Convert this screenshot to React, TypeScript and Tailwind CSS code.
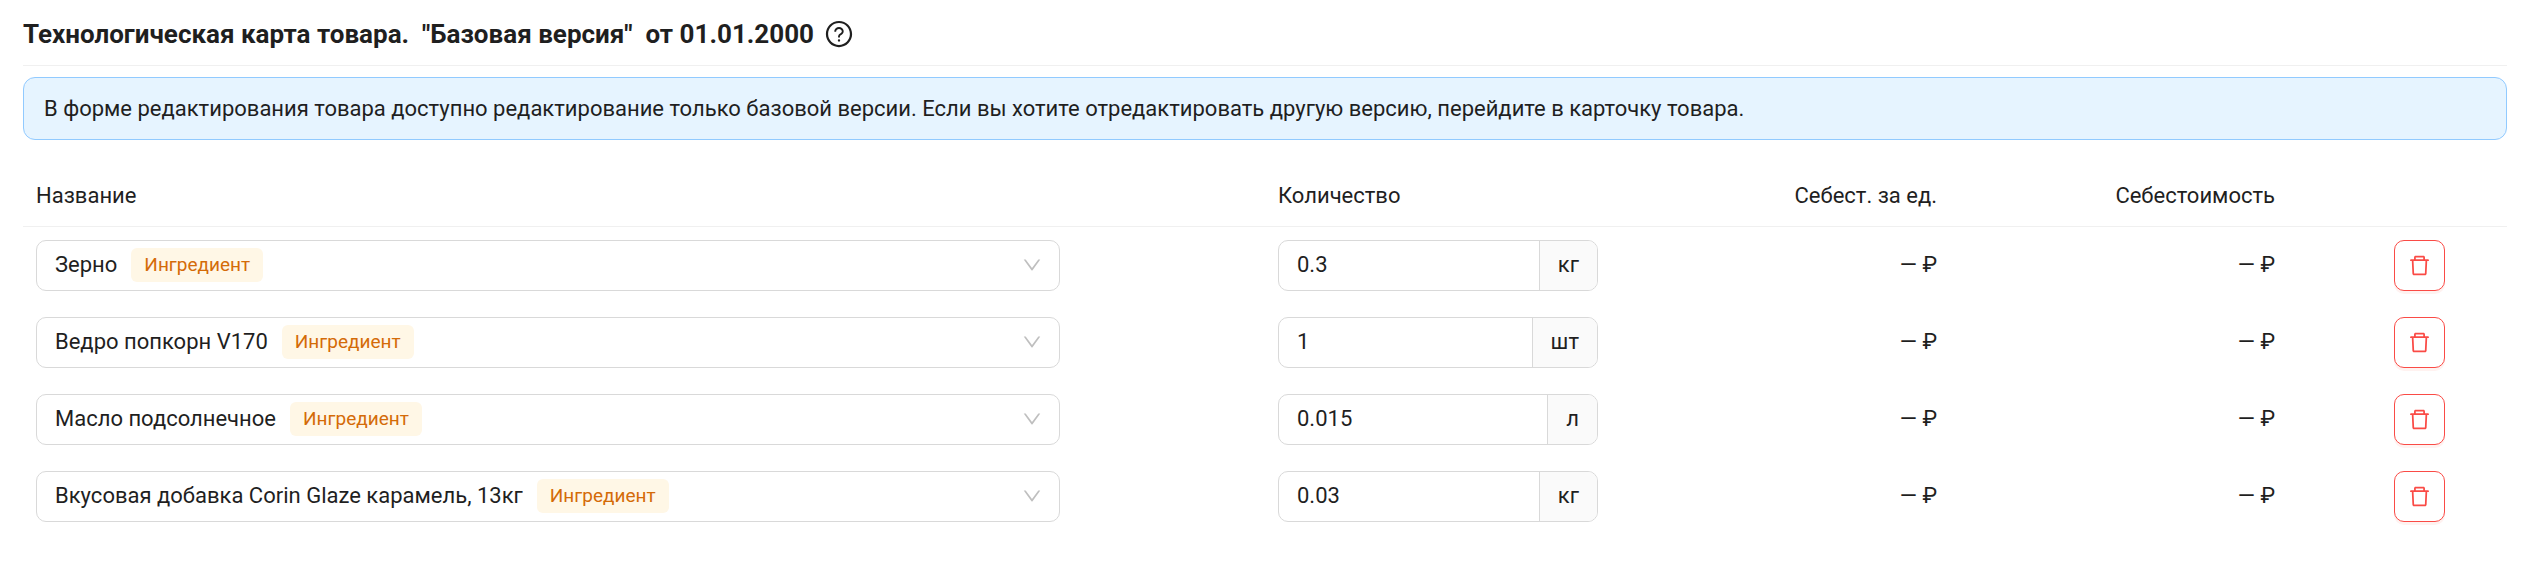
import { useState } from "react";
import {
  AiOutlineDelete,
  AiOutlineDown,
  AiOutlineQuestionCircle,
} from "react-icons/ai";

type Item = {
  id: number;
  name: string;
  amount: string;
  unit: string;
};

const initialItems: Item[] = [
  { id: 1, name: "Зерно", amount: "0.3", unit: "кг" },
  { id: 2, name: "Ведро попкорн V170", amount: "1", unit: "шт" },
  { id: 3, name: "Масло подсолнечное", amount: "0.015", unit: "л" },
  {
    id: 4,
    name: "Вкусовая добавка Corin Glaze карамель, 13кг",
    amount: "0.03",
    unit: "кг",
  },
];

const products = initialItems.map((item) => item.name);

function ProductSelect({
  value,
  onChange,
}: {
  value: string;
  onChange: (value: string) => void;
}) {
  return (
    <div className="flex h-[51px] items-center rounded-[10px] border border-[#d9d9d9] bg-white pl-[18px] pr-4">
      <select
        aria-label="Название"
        value={value}
        onChange={(e) => onChange(e.target.value)}
        className="mr-[14px] cursor-pointer appearance-none bg-transparent outline-none [field-sizing:content]"
      >
        {products.map((name) => (
          <option key={name} value={name}>
            {name}
          </option>
        ))}
      </select>
      <span className="rounded-md bg-[#fff7e6] px-[13px] text-[19px] leading-[34px] text-[#d46b08]">
        Ингредиент
      </span>
      <AiOutlineDown className="ml-auto size-[22px] text-[#bfbfbf]" />
    </div>
  );
}

function AmountInput({
  value,
  unit,
  onChange,
}: {
  value: string;
  unit: string;
  onChange: (value: string) => void;
}) {
  return (
    <div className="flex h-[51px] overflow-hidden rounded-[10px] border border-[#d9d9d9] bg-white">
      <input
        type="text"
        aria-label="Количество"
        value={value}
        onChange={(e) => onChange(e.target.value)}
        className="min-w-0 flex-1 px-[18px] outline-none"
      />
      <span className="flex items-center border-l border-[#d9d9d9] bg-[#fafafa] px-[18px]">
        {unit}
      </span>
    </div>
  );
}

export default function App() {
  const [items, setItems] = useState<Item[]>(initialItems);

  const updateItem = (id: number, patch: Partial<Item>) => {
    setItems(items.map((item) => (item.id === id ? { ...item, ...patch } : item)));
  };

  const removeItem = (id: number) => {
    setItems(items.filter((item) => item.id !== id));
  };

  return (
    <div className="min-h-screen bg-white pl-[23px] pr-[35px] font-['Roboto',sans-serif] text-[22px] leading-[34px] text-[#1f1f1f]">
      <div className="flex h-[66px] items-center gap-2.5 border-b border-[#f0f0f0] pt-0.5">
        <h1 className="whitespace-pre text-[26px] font-bold">
          {'Технологическая карта товара.  "Базовая версия"  от 01.01.2000'}
        </h1>
        <button type="button" aria-label="Справка" className="cursor-pointer">
          <AiOutlineQuestionCircle className="size-[30px]" />
        </button>
      </div>

      <div
        role="alert"
        className="mt-[11px] rounded-xl border border-[#91caff] bg-[#e6f4ff] px-5 pb-[13px] pt-[14px]"
      >
        В форме редактирования товара доступно редактирование только базовой версии. Если вы
        хотите отредактировать другую версию, перейдите в карточку товара.
      </div>

      <table className="mt-[23px] w-full table-fixed">
        <thead>
          <tr className="h-[63px] border-b border-[#f0f0f0]">
            <th className="w-1/2 px-[13px] pt-1 text-left font-normal">Название</th>
            <th className="w-[346px] px-[13px] pt-1 text-left font-normal">Количество</th>
            <th className="w-[339px] px-[13px] pt-1 text-right font-normal">Себест. за ед.</th>
            <th className="w-[338px] px-[13px] pt-1 text-right font-normal">Себестоимость</th>
            <th aria-label="Действия" />
          </tr>
        </thead>
        <tbody>
          {items.map((item) => (
            <tr key={item.id}>
              <td className="py-[13px] pl-[13px] pr-[205px]">
                <ProductSelect
                  value={item.name}
                  onChange={(name) => updateItem(item.id, { name })}
                />
              </td>
              <td className="px-[13px]">
                <AmountInput
                  value={item.amount}
                  unit={item.unit}
                  onChange={(amount) => updateItem(item.id, { amount })}
                />
              </td>
              <td className="px-[13px] text-right">— ₽</td>
              <td className="px-[13px] text-right">— ₽</td>
              <td className="pr-[62px]">
                <button
                  type="button"
                  aria-label="Удалить"
                  onClick={() => removeItem(item.id)}
                  className="ml-auto flex size-[51px] cursor-pointer items-center justify-center rounded-[10px] border border-[#fa4b46] bg-white text-[#fa4b46] shadow-[0_3px_0_rgba(255,38,5,0.06)]"
                >
                  <AiOutlineDelete className="size-[25px]" />
                </button>
              </td>
            </tr>
          ))}
        </tbody>
      </table>
    </div>
  );
}
